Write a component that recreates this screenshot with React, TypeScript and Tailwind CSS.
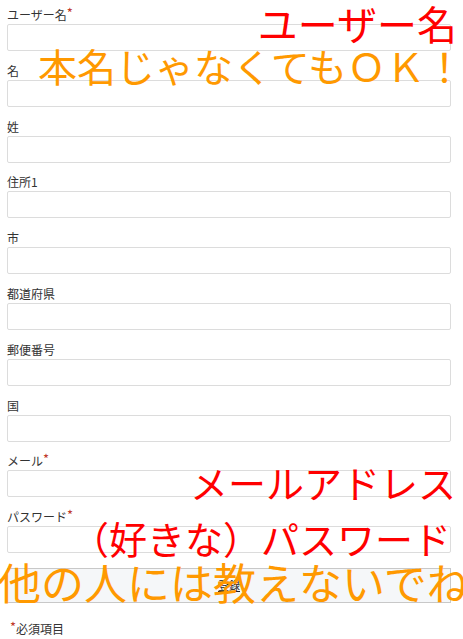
import React from "react";

const fields = [
  { label: "ユーザー名", required: true },
  { label: "名" },
  { label: "姓" },
  { label: "住所1" },
  { label: "市" },
  { label: "都道府県" },
  { label: "郵便番号" },
  { label: "国" },
  { label: "メール", required: true },
  { label: "パスワード", required: true, type: "password" },
];

export default function App() {
  return (
    <div
      className="relative w-[463px] h-[639px] overflow-hidden bg-white text-[#333]"
      style={{ fontFamily: '"Noto Sans CJK JP", "Noto Sans", sans-serif' }}
    >
      {/* form ===================== */}
      <form className="ml-[7px] w-[444px] pt-[6px] flex flex-col">
        {fields.map((f, idx) => (
          <div key={idx} className="mb-[10.8px] flex flex-col">
            <label className="h-[18px] text-[12px] leading-[18px]">
              {f.label}
              {f.required && (
                <span className="text-[#c0392b] align-top text-[13px] leading-[14px]">*</span>
              )}
            </label>
            <input
              type={f.type ?? "text"}
              className="w-full h-[27px] border border-[#dcdcdc] rounded-[2px] bg-white outline-none"
            />
          </div>
        ))}
        <button
          type="button"
          className="w-full h-[35px] mt-[4px] border border-[#c8c8c8] bg-[#f5f7f9] text-[11px] text-[#222] underline"
        >
          登録
        </button>
        <p className="mt-[17px] ml-[3px] text-[12px] leading-[18px]">
          <span className="text-[#c0392b] align-top text-[13px] leading-[14px]">*</span>必須項目
        </p>
      </form>

      {/* annotations over the form ===================== */}
      <div className="absolute right-[6px] top-[-2px] text-[40px] leading-[50px] text-[#ff0000] whitespace-nowrap">
        ユーザー名
      </div>
      <div className="absolute left-[38px] top-[40px] text-[39px] leading-[50px] text-[#ff9900] whitespace-nowrap">
        本名じゃなくてもＯＫ！
      </div>
      <div className="absolute right-[7px] top-[457px] text-[38px] leading-[50px] text-[#ff0000] whitespace-nowrap">
        メールアドレス
      </div>
      <div className="absolute right-[12px] top-[513px] text-[38px] leading-[50px] text-[#ff0000] whitespace-nowrap">
        （好きな）パスワード
      </div>
      <div className="absolute left-[-2px] top-[554px] text-[43px] leading-[54px] text-[#ff9900] whitespace-nowrap">
        他の人には教えないでね
      </div>
    </div>
  );
}
